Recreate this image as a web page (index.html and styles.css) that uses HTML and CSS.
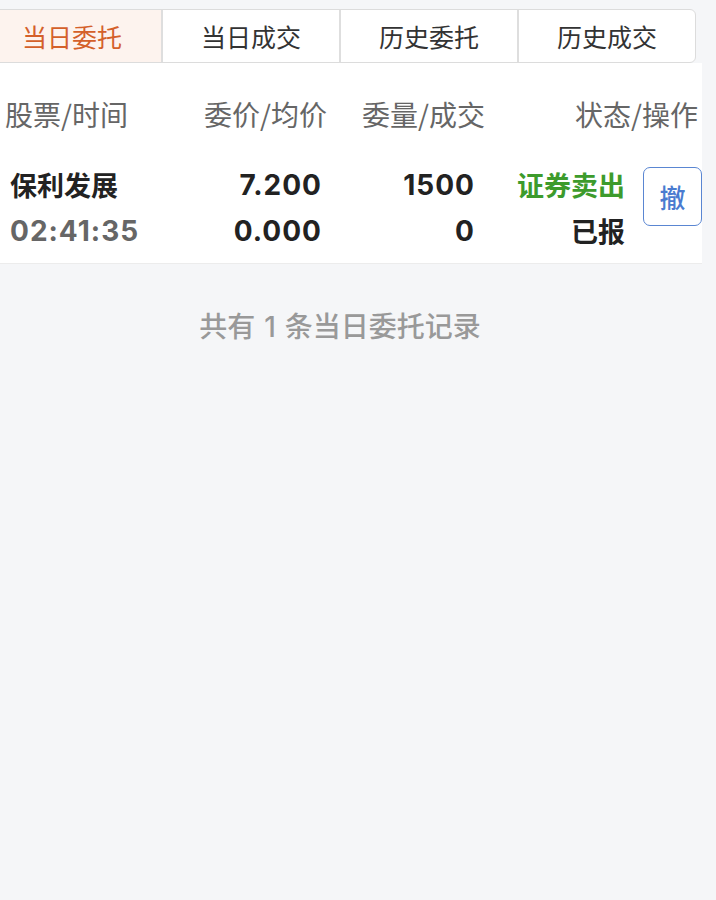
FILE: index.html
```html
<!DOCTYPE html>
<html>
<head>
    <title>当日委托</title>
    <link rel="stylesheet" href="styles.css">
</head>
<body>
    <div class="page">
        <div class="tabs">
            <div class="tab active">当日委托</div>
            <div class="tab">当日成交</div>
            <div class="tab">历史委托</div>
            <div class="tab">历史成交</div>
        </div>

        <div class="list">
            <div class="head">
                <span>股票/时间</span>
                <span class="r">委价/均价</span>
                <span class="r">委量/成交</span>
                <span class="r">状态/操作</span>
            </div>

            <div class="order">
                <div class="cell">
                    <span class="name">保利发展</span>
                    <span class="time num">02:41:35</span>
                </div>
                <div class="cell r num">
                    <span>7.200</span>
                    <span>0.000</span>
                </div>
                <div class="cell r num">
                    <span>1500</span>
                    <span>0</span>
                </div>
                <div class="cell r">
                    <span class="sell">证券卖出</span>
                    <span>已报</span>
                </div>
                <div class="op">
                    <button class="cancel">撤</button>
                </div>
            </div>
        </div>

        <p class="summary">共有<span class="num">1</span>条当日委托记录</p>
    </div>
</body>
</html>
```

FILE: styles.css
```css
html, body { margin: 0; padding: 0; background: #f5f6f8; overflow: hidden; }
body { font-family: "Noto Sans CJK SC", sans-serif; color: #222; }
.num { font-family: Inter, "Noto Sans CJK SC", sans-serif; font-size: 28px; letter-spacing: 1px; }

.page { width: 720px; margin-left: -18px; }

.tabs { display: grid; grid-template-columns: repeat(4, 1fr); margin: 9px 6px 0 0; border: 1px solid #dcdcdc; border-radius: 0 6px 6px 0; background: #fff; overflow: hidden; }
.tab { height: 52px; line-height: 52px; text-align: center; font-size: 25px; color: #333; border-left: 2px solid #dedede; }
.tab:first-child { border-left: none; }
.tab.active { background: #fdf3ee; color: #d4602a; }

.list { background: #fff; }
.head { display: grid; grid-template-columns: 1fr 150px 158px 213px; padding: 28px 4px 0 23px; font-size: 28px; line-height: 46px; color: #666; }
.r { text-align: right; }

.order { display: grid; grid-template-columns: 1fr 160px 153px 150px 77px; padding: 25px 0 9px 28px; border-bottom: 1px solid #ececec; font-size: 27px; font-weight: bold; line-height: 46px; }
.cell { display: flex; flex-direction: column; }
.cell.r { align-items: flex-end; }
.time { color: #666; }
.sell { color: #3d9b2c; }

.op { padding: 5px 0 0 18px; }
.cancel { width: 59px; height: 59px; padding: 0; border: 1px solid #5a86d2; border-radius: 7px; background: #fff; color: #4a7bd0; font-family: "Noto Sans CJK SC", sans-serif; font-size: 26px; font-weight: 500; }

.summary { margin: 0; padding: 38px 4px 0 0; text-align: center; font-size: 28px; font-weight: 500; line-height: 46px; color: #999; }
.summary .num { margin: 0 9px; letter-spacing: 0; }
```
